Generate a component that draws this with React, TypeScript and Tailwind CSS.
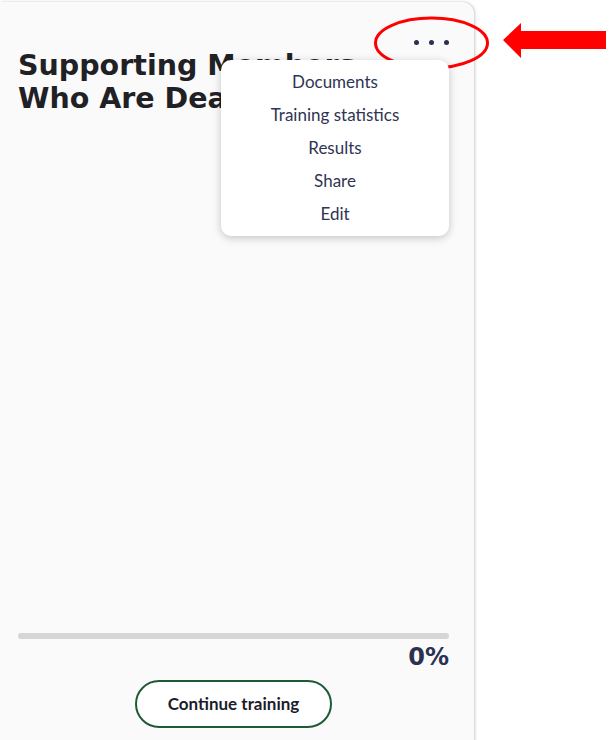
import React from "react";

const items = ["Documents", "Training statistics", "Results", "Share", "Edit"];

export default function App() {
  return (
    <div className="relative w-[612px] h-[740px] overflow-hidden bg-white">
      <div className="mt-[2px] w-[474px] h-[770px] rounded-tr-[12px] bg-[#fafafa] shadow-[1px_0_3px_rgba(0,0,0,0.22)] flex flex-col pl-[18px] pr-[25px] pb-[44px]">
        <div className="flex items-start pt-[28px]">
          <h1
            className="flex-1 mt-[19px] max-w-[380px] text-[28.5px] leading-[33px] font-bold text-[#1f2125]"
            style={{ fontFamily: '"DejaVu Sans", sans-serif' }}
          >
            Supporting Members Who Are Deafblind
          </h1>
          <div className="relative ml-auto">
            <button className="flex h-[24px] items-center gap-[10px] px-0">
              <span className="block h-[5px] w-[5px] rounded-full bg-[#2b3050]" />
              <span className="block h-[5px] w-[5px] rounded-full bg-[#2b3050]" />
              <span className="block h-[5px] w-[5px] rounded-full bg-[#2b3050]" />
            </button>
            <div
              className="absolute right-0 top-[30px] w-[228px] rounded-[10px] bg-white pt-[5px] pb-[6px] shadow-[0_2px_8px_rgba(0,0,0,0.22)] z-10"
              style={{ fontFamily: 'Lato, "Open Sans", sans-serif' }}
            >
              {items.map((t) => (
                <div key={t} className="flex h-[33px] items-center justify-center text-[17px] text-[#2f3553]">
                  {t}
                </div>
              ))}
            </div>
          </div>
        </div>
        <div className="mt-auto flex flex-col">
          <div className="h-[6px] w-full rounded-full bg-[#d6d6d6]" />
          <div
            className="mt-[3px] text-right text-[24px] leading-[30px] font-bold text-[#2b3150]"
            style={{ fontFamily: '"DejaVu Sans", sans-serif' }}
          >
            0%
          </div>
          <div className="mt-[8px] flex justify-center">
            <button
              className="h-[48px] w-[197px] rounded-full border-2 border-[#1f5a36] bg-white text-[17px] font-bold text-[#1a1c2c]"
              style={{ fontFamily: 'Lato, "Open Sans", sans-serif' }}
            >
              Continue training
            </button>
          </div>
        </div>
      </div>
      <svg className="pointer-events-none absolute left-0 top-0" width="612" height="740">
        <ellipse cx="431.5" cy="43" rx="56" ry="25" fill="none" stroke="#ff0000" strokeWidth="3" />
        <polygon points="503,40 521,23 521,31 606,31 606,49 521,49 521,58" fill="#ff0000" />
      </svg>
    </div>
  );
}
